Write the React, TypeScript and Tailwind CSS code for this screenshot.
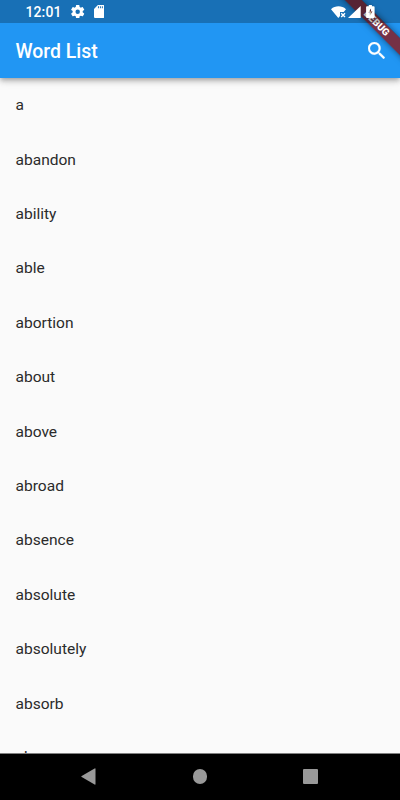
const words = [
  'a', 'abandon', 'ability', 'able', 'abortion', 'about', 'above',
  'abroad', 'absence', 'absolute', 'absolutely', 'absorb', 'abuse',
];

function StatusBar() {
  return (
    <div className="relative z-30 flex h-[23px] shrink-0 items-center bg-black/25 pl-[25.5px] pr-[25px] text-white">
      <span className="w-[45.8px] pt-px text-[14px] leading-none font-medium tracking-[0.1px]">12:01</span>
      <svg className="h-[13.4px] w-[13.4px] shrink-0" viewBox="2.4 2.4 19.2 19.2" fill="currentColor">
        <path d="M19.14 12.94c.04-.3.06-.61.06-.94 0-.32-.02-.64-.07-.94l2.03-1.58a.49.49 0 0 0 .12-.61l-1.92-3.32a.49.49 0 0 0-.59-.22l-2.39.96a7.03 7.03 0 0 0-1.62-.94l-.36-2.54a.48.48 0 0 0-.48-.41h-3.84a.48.48 0 0 0-.47.41l-.36 2.54c-.59.24-1.13.57-1.62.94l-2.39-.96a.48.48 0 0 0-.59.22L2.74 8.87a.48.48 0 0 0 .12.61l2.03 1.58c-.05.3-.09.63-.09.94s.02.64.07.94l-2.03 1.58a.49.49 0 0 0-.12.61l1.92 3.32c.12.22.37.29.59.22l2.39-.96c.5.38 1.03.7 1.62.94l.36 2.54c.05.24.24.41.48.41h3.84c.24 0 .44-.17.47-.41l.36-2.54c.59-.24 1.13-.56 1.62-.94l2.39.96c.22.08.47 0 .59-.22l1.92-3.32a.48.48 0 0 0-.12-.61l-2.01-1.58zM12 15.2a3.2 3.2 0 1 1 0-6.4 3.2 3.2 0 0 1 0 6.4z" />
      </svg>
      <svg className="ml-[9.3px] h-[13px] w-[10.4px] shrink-0" viewBox="4 2 16 20" preserveAspectRatio="none" fill="currentColor">
        <path d="M18 2h-8L4.02 8 4 20c0 1.1.9 2 2 2h12c1.1 0 2-.9 2-2V4c0-1.1-.9-2-2-2zm-6.400 5h-1.500V4h1.500v3zm3 0h-1.500V4h1.500v3zm3 0h-1.500V4h1.500v3z" />
      </svg>
      <svg className="ml-auto h-[12px] w-[15px] shrink-0" viewBox="0 0 15 12" fill="currentColor">
        <path d="M0 3.2C4.300-.6 10.700-.6 15 3.200L12.700 6.100H9v3.900L7.300 12z" />
        <path d="M10.200 7.200l3.800 3.800m0-3.800l-3.800 3.800" fill="none" stroke="currentColor" strokeWidth="1.400" />
      </svg>
      <svg className="ml-[2px] h-[12px] w-[12.7px] shrink-0" viewBox="0 0 13 12" preserveAspectRatio="none" fill="currentColor">
        <path d="M13 0v12H0z" />
      </svg>
      <svg className="ml-[5.8px] h-[13px] w-[8.7px] shrink-0" viewBox="0 0 8.5 13" fill="currentColor" fillRule="evenodd">
        <path d="M2.7 0h3.1v1.300h1.800q.9 0 .9.900v9.900q0 .9-.9.900H.9q-.9 0-.9-.9V2.200q0-.9.900-.9h1.800zM4.900 3.500L2.200 7.600h1.500v3.200L6.400 6.500H4.900z" />
      </svg>
    </div>
  );
}

function DebugBanner() {
  return (
    <div className="pointer-events-none absolute top-0 right-0 z-20 h-[60px] w-[60px]">
      <div className="absolute top-[27.2px] left-0 h-[11.7px] w-[120px] origin-[60px_-27.2px] rotate-45 bg-black/45 shadow-[0_0_6px_rgba(0,0,0,0.5)]">
        <div className="flex h-full items-center justify-center bg-[#b71c1c]/60 text-[9.9px] leading-none font-black text-white">
          DEBUG
        </div>
      </div>
    </div>
  );
}

export default function App() {
  return (
    <div className="relative flex h-[800px] w-[400px] flex-col overflow-hidden bg-[#fafafa] font-['Roboto',sans-serif]">
      <StatusBar />
      <header className="relative z-10 -mt-[23px] flex h-[78px] shrink-0 items-center justify-between bg-[#2196f3] pt-[23px] pr-[14.7px] pl-[15.5px] text-white shadow-[0_2px_4px_-1px_rgba(0,0,0,0.2),0_4px_5px_rgba(0,0,0,0.14),0_1px_10px_rgba(0,0,0,0.12)]">
        <h1 className="pt-[2px] text-[19.44px] leading-none font-medium">Word List</h1>
        <svg className="h-[17px] w-[17px]" viewBox="3 3 17.49 17.49" fill="currentColor" stroke="currentColor" strokeWidth="0.3" aria-label="Search">
          <path d="M15.5 14h-.79l-.28-.27A6.471 6.471 0 0 0 16 9.5 6.5 6.5 0 1 0 9.5 16c1.61 0 3.09-.59 4.23-1.57l.27.28v.79l5 4.99L20.49 19l-4.99-5zm-6 0C7.01 14 5 11.99 5 9.5S7.01 5 9.5 5 14 7.01 14 9.5 11.99 14 9.5 14z" />
        </svg>
      </header>
      <ul className="min-h-0 flex-1 overflow-hidden">
        {words.map((word) => (
          <li key={word} className="flex h-[54.4px] items-center pt-[1.6px] pl-[15.5px] text-[15.55px] leading-none text-[#2b2b2b] last:pt-0">
            {word}
          </li>
        ))}
      </ul>
      <nav className="flex h-[47px] shrink-0 items-center border-t border-[#808080] bg-black pb-[1.4px] pl-[81px] text-[#999999]">
        <svg className="h-[17px] w-[15px]" viewBox="0 0 15 17" fill="currentColor">
          <path d="M13.6.5Q14.5 0 14.500 1v15q0 1-.9.500L.7 9q-.8-.5 0-1z" />
        </svg>
        <div className="ml-[97px] h-[14.4px] w-[14.4px] rounded-full bg-[#999999]" />
        <div className="ml-[95.6px] h-[15px] w-[15px] rounded-[1px] bg-[#999999]" />
      </nav>
      <DebugBanner />
    </div>
  );
}
